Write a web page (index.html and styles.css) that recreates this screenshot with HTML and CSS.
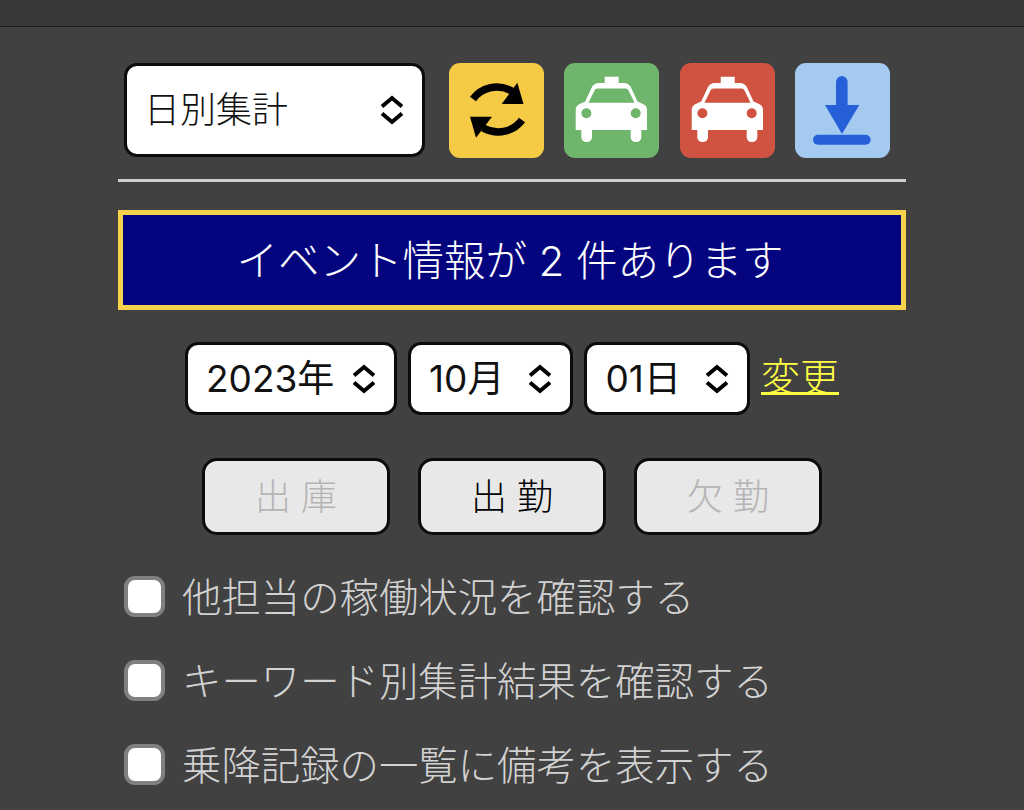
FILE: index.html
```html
<!DOCTYPE html>
<html lang="ja">
<head>
<meta charset="utf-8">
<title>日別集計</title>
<link rel="stylesheet" href="styles.css">
</head>
<body>
<div class="topbar"></div>
<main class="panel">
  <div class="toolbar">
    <div class="select-wrap mode-wrap">
      <select class="select mode"><option>日別集計</option></select>
      <svg class="chev" viewBox="0 0 26 30"><path d="M3 11.500 13 3l10 8.500M3 18.500 13 27l10-8.500"/></svg>
    </div>
    <a class="tile tile-yellow">
      <svg viewBox="0 0 95 95">
        <path class="arc" d="M24 36C32 25 48 20 63 28"/>
        <path d="M68.300 19.700 74.500 41 52.700 41Z"/>
        <path class="arc" d="M73 57C65 68 49 73 34 65"/>
        <path d="M27 74.700 21 53.700 43 53.700Z"/>
      </svg>
    </a>
    <a class="tile tile-green">
      <svg viewBox="0 0 95 95"><use href="#taxi"/></svg>
    </a>
    <a class="tile tile-red">
      <svg viewBox="0 0 95 95"><use href="#taxi"/></svg>
    </a>
    <a class="tile tile-blue">
      <svg viewBox="0 0 95 95">
        <rect x="41" y="13" width="11.600" height="34" rx="5.800"/>
        <path d="M30 42H64.300L47 71Z"/>
        <rect x="18" y="71.700" width="57.600" height="10" rx="5"/>
      </svg>
    </a>
  </div>
  <hr class="rule">
  <div class="banner">イベント情報が 2 件あります</div>
  <div class="date-row">
    <div class="select-wrap year-wrap">
      <select class="select date"><option>2023年</option></select>
      <svg class="chev" viewBox="0 0 26 30"><path d="M3 11.500 13 3l10 8.500M3 18.500 13 27l10-8.500"/></svg>
    </div>
    <div class="select-wrap short-wrap">
      <select class="select date"><option>10月</option></select>
      <svg class="chev" viewBox="0 0 26 30"><path d="M3 11.500 13 3l10 8.500M3 18.500 13 27l10-8.500"/></svg>
    </div>
    <div class="select-wrap short-wrap">
      <select class="select date"><option>01日</option></select>
      <svg class="chev" viewBox="0 0 26 30"><path d="M3 11.500 13 3l10 8.500M3 18.500 13 27l10-8.500"/></svg>
    </div>
    <a class="change" href="#">変更</a>
  </div>
  <div class="button-row">
    <button class="btn" disabled>出 庫</button>
    <button class="btn">出 勤</button>
    <button class="btn" disabled>欠 勤</button>
  </div>
  <div class="checks">
    <label class="check"><input type="checkbox"><span>他担当の稼働状況を確認する</span></label>
    <label class="check"><input type="checkbox"><span>キーワード別集計結果を確認する</span></label>
    <label class="check"><input type="checkbox"><span>乗降記録の一覧に備考を表示する</span></label>
  </div>
</main>
<svg class="defs" width="0" height="0">
  <defs>
    <symbol id="taxi" viewBox="0 0 95 95">
      <path fill-rule="evenodd" d="M40.700 13.700H54.700V20H60C63 20 65.500 21.500 67 24.500L73.500 38.500 79 41C81.500 42.200 83 44 83 47V67H77.300V74C77.300 77 75 79 72 79S66.700 77 66.700 74V67H28V74C28 77 25.700 79 22.700 79S17.300 77 17.300 74V67H11.700V47C11.700 44 13.200 42.200 15.700 41L21.200 38.500 27.700 24.500C29.200 21.500 31.700 20 34.700 20H40.700ZM33.500 25.500C32 25.500 31 26.200 30.500 27.500L24.500 39.800H70.500L64.500 27.500C64 26.200 63 25.500 61.500 25.500ZM22.400 45.200A5 5 0 1 0 22.400 55.200 5 5 0 1 0 22.400 45.200ZM71.700 45.200A5 5 0 1 0 71.700 55.200 5 5 0 1 0 71.700 45.200Z"/>
    </symbol>
  </defs>
</svg>
</body>
</html>
```
FILE: styles.css
```css
* { box-sizing: border-box; }
html, body { margin: 0; padding: 0; }
body {
  height: 810px;
  overflow: hidden;
  background: #414141;
  font-family: Inter, "Noto Sans CJK JP", sans-serif;
  font-weight: 300;
}
.topbar {
  height: 27px;
  background: #37383a;
  border-bottom: 1px solid #1f1f1f;
}
.panel {
  width: 788px;
  margin-left: 118px;
  padding-top: 36px;
}
.toolbar {
  display: flex;
  align-items: flex-start;
  gap: 20.600px;
  padding-left: 6px;
}
.select-wrap { position: relative; flex: none; }
.mode-wrap { width: 301px; height: 94px; margin-right: 3px; }
.year-wrap { width: 212px; height: 73px; }
.short-wrap { width: 165.500px; height: 73px; }
.select {
  appearance: none;
  display: block;
  width: 100%;
  height: 100%;
  margin: 0;
  background: #fff;
  border: 3px solid #0c0c0c;
  border-radius: 13px;
  color: #111;
  font: inherit;
  font-weight: 300;
}
.mode { font-size: 36px; padding: 0 60px 0 17px; }
.date { font-size: 37px; font-weight: 400; padding: 0 46px 0 18px; }
.chev {
  position: absolute;
  right: 20px;
  top: 50%;
  width: 26px;
  height: 30px;
  margin-top: -15px;
  fill: none;
  stroke: #000;
  stroke-width: 4;
  pointer-events: none;
}
.tile {
  flex: none;
  display: block;
  width: 95px;
  height: 95px;
  border-radius: 11px;
}
.tile svg { display: block; width: 95px; height: 95px; }
.tile-yellow { background: #f5cb45; }
.tile-green { background: #6fb56c; fill: #fff; }
.tile-red { background: #cf5340; fill: #fff; }
.tile-blue { background: #a4caf0; fill: #2560d8; }
.arc { fill: none; stroke: #000; stroke-width: 7.500; }
.rule {
  height: 3px;
  margin: 20.500px 0 0;
  border: 0;
  background: #cfcfcf;
}
.banner {
  display: flex;
  align-items: center;
  justify-content: center;
  height: 100px;
  margin-top: 28.500px;
  padding: 0 4px 4px 0;
  background: #04047f;
  border: 5px solid #f7d24a;
  color: #fff;
  font-size: 41.500px;
}
.date-row {
  display: flex;
  align-items: center;
  justify-content: center;
  gap: 11px;
  margin-top: 32px;
}
.change {
  padding-bottom: 4px;
  color: #ffff44;
  font-size: 39px;
  line-height: 60px;
  text-underline-offset: 1px;
}
.button-row {
  display: flex;
  justify-content: center;
  gap: 28px;
  margin-top: 43px;
}
.btn {
  width: 188px;
  height: 77px;
  padding: 0 0 5px;
  background: #e8e8e8;
  border: 3px solid #0c0c0c;
  border-radius: 15px;
  color: #000;
  font: inherit;
  font-size: 36px;
  font-weight: 300;
}
.btn:disabled { color: #b4b4b4; }
.checks {
  display: flex;
  flex-direction: column;
  gap: 43px;
  margin-top: 41px;
  padding-left: 6px;
}
.check {
  display: flex;
  align-items: center;
  gap: 17px;
  height: 41px;
  color: #d2d2d2;
  font-size: 39.400px;
}
.check span { padding-bottom: 5px; }
.check input {
  appearance: none;
  flex: none;
  width: 41px;
  height: 41px;
  margin: 0;
  background: #fff;
  border: 4px solid #808080;
  border-radius: 11px;
}
.defs { position: absolute; }
```
